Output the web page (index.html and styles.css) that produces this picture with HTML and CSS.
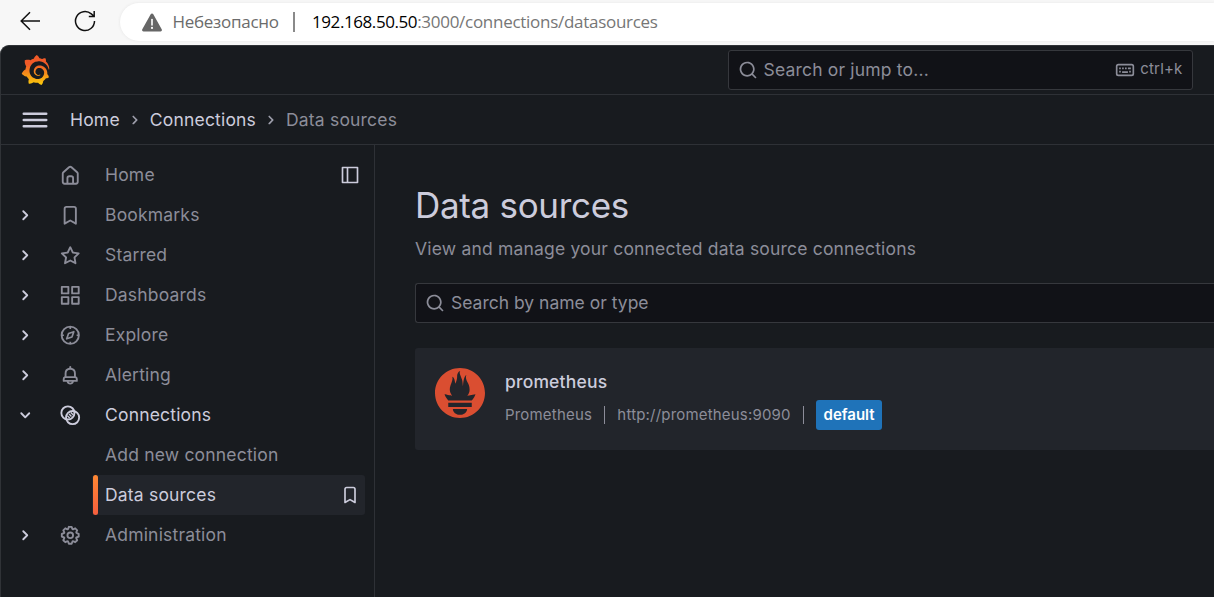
FILE: index.html
```html
<!DOCTYPE html>
<html lang="en">
<head>
<meta charset="utf-8">
<title>Data sources - Grafana</title>
<link rel="stylesheet" href="styles.css">
</head>
<body>
<svg width="0" height="0" class="sprite" aria-hidden="true">
  <symbol id="chevron" viewBox="0 0 24 24"><path d="M14.83,11.29,10.59,7.05a1,1,0,0,0-1.42,0,1,1,0,0,0,0,1.41L12.71,12,9.17,15.54a1,1,0,0,0,0,1.41,1,1,0,0,0,.71.29,1,1,0,0,0,.71-.29l4.24-4.24A1,1,0,0,0,14.83,11.29Z"/></symbol>
  <symbol id="bookmark" viewBox="0 0 24 24"><path d="M16,2H8A3,3,0,0,0,5,5V21a1,1,0,0,0,.5.87,1,1,0,0,0,1,0L12,18.69l5.5,3.18A1,1,0,0,0,18,22a1,1,0,0,0,.5-.13A1,1,0,0,0,19,21V5A3,3,0,0,0,16,2Zm1,17.27-4.5-2.6a1,1,0,0,0-1,0L7,19.27V5A1,1,0,0,1,8,4h8a1,1,0,0,1,1,1Z"/></symbol>
  <symbol id="search" viewBox="0 0 24 24"><path d="M21.71,20.29,18,16.61A9,9,0,1,0,16.61,18l3.68,3.68a1,1,0,0,0,1.42,0A1,1,0,0,0,21.71,20.29ZM11,18a7,7,0,1,1,7-7A7,7,0,0,1,11,18Z"/></symbol>
</svg>

<header class="browser">
  <svg class="back" viewBox="0 0 22 20"><path d="M21 10H2.200M11 1.200 2.200 10 11 18.800"/></svg>
  <svg class="reload" viewBox="0 0 22 22"><path d="M20.500 11a9.500 9.500 0 1 1-3.200-7.100L20 6.200M20.200 1v5.400h-5.400"/></svg>
  <div class="address">
    <svg class="warn" viewBox="0 0 20 19"><path fill="#666" d="M8.700 1.200a1.500 1.500 0 0 1 2.600 0l8.400 15a1.500 1.500 0 0 1-1.300 2.300H1.600a1.500 1.500 0 0 1-1.300-2.300z"/><path stroke="#fff" stroke-width="1.600" stroke-linecap="round" d="M10 6.500v5.500"/><circle cx="10" cy="14.900" r="1.100" fill="#fff"/></svg>
    <span class="insecure">Небезопасно</span>
    <span class="divider"></span>
    <span class="url"><b>192.168.50.50</b>:3000/connections/datasources</span>
  </div>
</header>

<div class="app">
  <div class="topbar">
    <svg class="logo" viewBox="0 0 351 365"><defs><linearGradient id="g" gradientUnits="userSpaceOnUse" x1="175.500" y1="445" x2="175.500" y2="114"><stop offset="0" stop-color="#fff100"/><stop offset="1" stop-color="#f05a28"/></linearGradient></defs><path fill="url(#g)" d="M342,161.2c-0.6-6.1-1.6-13.1-3.6-20.9c-2-7.7-5-16.2-9.4-25c-4.4-8.800-10.1-17.9-17.5-26.8c-2.9-3.5-6.1-6.9-9.5-10.2c5.1-20.3-6.2-37.9-6.2-37.9c-19.5-1.2-31.9,6.1-36.5,9.4c-0.8-0.3-1.5-0.7-2.3-1c-3.3-1.3-6.7-2.6-10.3-3.7c-3.5-1.1-7.1-2.1-10.8-3c-3.7-0.9-7.4-1.6-11.2-2.2c-0.7-0.1-1.3-0.2-2-0.3c-8.5-27.2-32.9-38.6-32.9-38.6c-27.3,17.3-32.4,41.5-32.4,41.5s-0.1,0.5-0.3,1.4c-1.5,0.4-3,0.9-4.5,1.3c-2.1,0.6-4.2,1.4-6.2,2.2c-2.1,0.8-4.1,1.6-6.2,2.5c-4.1,1.8-8.2,3.8-12.2,6c-3.9,2.2-7.7,4.6-11.4,7.1c-0.5-0.2-1-0.4-1-0.4c-37.8-14.4-71.3,2.9-71.3,2.9c-3.1,40.2,15.1,65.5,18.7,70.1c-0.9,2.5-1.7,5-2.5,7.5c-2.8,9.1-4.9,18.4-6.2,28.1c-0.2,1.4-0.4,2.8-0.5,4.2C18.8,192.700,8.5,228,8.5,228c29.1,33.5,63.1,35.6,63.1,35.6c0,0,0.1-0.1,0.1-0.1c4.3,7.7,9.3,15,14.9,21.9c2.4,2.9,4.8,5.6,7.4,8.3c-10.6,30.4,1.5,55.6,1.5,55.6c32.4,1.2,53.7-14.2,58.2-17.7c3.2,1.1,6.5,2.1,9.8,2.9c10,2.6,20.2,4.1,30.4,4.5c2.5,0.1,5.1,0.2,7.6,0.1l1.2,0l0.8,0l1.6,0l1.6-0.1l0,0.1c15.3,21.8,42.1,24.9,42.1,24.9c19.1-20.1,20.2-40.1,20.2-44.400l0,0c0,0,0-0.1,0-0.3c0-0.4,0-0.6,0-0.6l0,0c0-0.3,0-0.6,0-0.9c4-2.8,7.8-5.8,11.4-9.1c7.6-6.9,14.3-14.8,19.9-23.3c0.5-0.8,1-1.6,1.5-2.4c21.6,1.2,36.9-13.4,36.9-13.4c-3.6-22.5-16.4-33.5-19.1-35.6l0,0c0,0-0.1-0.1-0.3-0.2c-0.2-0.1-0.2-0.2-0.2-0.2c0,0,0,0,0,0c-0.1-0.1-0.3-0.2-0.5-0.3c0.1-1.4,0.2-2.7,0.3-4.1c0.2-2.4,0.2-4.9,0.2-7.3l0-1.8l0-0.9l0-0.5c0-0.6,0-0.4,0-0.6l-0.1-1.5l-0.1-2c0-0.7-0.1-1.3-0.2-1.9c-0.1-0.6-0.1-1.3-0.2-1.9l-0.2-1.9l-0.3-1.9c-0.4-2.5-0.8-4.9-1.4-7.4c-2.3-9.7-6.1-18.9-11-27.2c-5-8.3-11.2-15.6-18.3-21.8c-7-6.2-14.9-11.2-23.1-14.9c-8.3-3.7-16.9-6.1-25.5-7.2c-4.3-0.6-8.6-0.8-12.9-0.7l-1.6,0l-0.4,0c-0.1,0-0.6,0-0.5,0l-0.7,0l-1.6,0.1c-0.6,0-1.2,0.1-1.7,0.1c-2.2,0.2-4.4,0.5-6.5,0.9c-8.6,1.6-16.7,4.7-23.8,9c-7.1,4.3-13.3,9.6-18.3,15.6c-5,6-8.9,12.7-11.6,19.6c-2.7,6.9-4.2,14.1-4.6,21c-0.1,1.7-0.1,3.5-0.1,5.2c0,0.4,0,0.9,0,1.3l0.1,1.4c0.1,0.8,0.1,1.7,0.2,2.5c0.3,3.5,1,6.9,1.9,10.1c1.9,6.5,4.9,12.4,8.6,17.4c3.7,5,8.2,9.1,12.9,12.4c4.7,3.2,9.8,5.5,14.8,7c5,1.5,10,2.1,14.7,2.1c0.6,0,1.2,0,1.7,0c0.3,0,0.6,0,0.9,0c0.3,0,0.6,0,0.9-0.1c0.5,0,1-0.1,1.5-0.1c0.1,0,0.3,0,0.4-0.1l0.5-0.1c0.3,0,0.6-0.1,0.9-0.1c0.6-0.1,1.1-0.2,1.7-0.3c0.6-0.1,1.1-0.2,1.6-0.4c1.1-0.2,2.1-0.6,3.1-0.9c2-0.7,4-1.5,5.7-2.4c1.8-0.9,3.4-2,5-3c0.4-0.3,0.9-0.6,1.3-1c1.6-1.3,1.9-3.7,0.6-5.3c-1.1-1.4-3.1-1.8-4.7-0.9c-0.4,0.2-0.8,0.4-1.2,0.6c-1.4,0.7-2.8,1.3-4.3,1.8c-1.5,0.5-3.1,0.9-4.7,1.2c-0.8,0.1-1.6,0.2-2.5,0.3c-0.4,0-0.8,0.1-1.3,0.1c-0.4,0-0.9,0-1.2,0c-0.4,0-0.8,0-1.2,0c-0.5,0-1,0-1.5-0.1l-0.3,0l-0.3,0c-0.2,0-0.5,0-0.7-0.1c-0.5-0.1-0.9-0.1-1.4-0.2c-3.7-0.5-7.4-1.6-10.9-3.2c-3.6-1.6-7-3.8-10.1-6.6c-3.1-2.8-5.8-6.1-7.9-9.9c-2.1-3.8-3.6-8-4.3-12.4c-0.3-2.2-0.5-4.5-0.4-6.7c0-0.6,0.1-1.2,0.1-1.8l0-0.3l0-0.5c0-0.3,0.1-0.6,0.1-0.9c0.1-1.2,0.3-2.4,0.5-3.6c1.7-9.6,6.5-19,13.9-26.1c1.9-1.8,3.9-3.4,6-4.9c2.1-1.5,4.4-2.8,6.8-3.9c2.4-1.1,4.8-2,7.4-2.7c2.5-0.7,5.1-1.1,7.8-1.4c1.3-0.1,2.6-0.2,4-0.2c0.4,0,0.6,0,0.9,0l1.1,0l0.7,0l0.4,0l1.1,0.1c2.9,0.2,5.7,0.6,8.5,1.3c5.6,1.2,11.1,3.3,16.2,6.1c10.2,5.7,18.9,14.5,24.2,25.1c2.7,5.3,4.6,11,5.5,16.9c0.2,1.5,0.4,3,0.5,4.5l0.1,1.1l0.1,1.1c0,0.4,0,0.8,0,1.1c0,0.4,0,0.8,0,1.1l0,1l0,1.1c0,0.7-0.1,1.9-0.1,2.6c-0.1,1.6-0.3,3.3-0.5,4.9c-0.2,1.6-0.5,3.2-0.8,4.8c-0.3,1.6-0.7,3.2-1.1,4.7c-0.8,3.1-1.8,6.2-3,9.3c-2.4,6-5.6,11.8-9.4,17.1c-7.7,10.6-18.2,19.2-30.2,24.7c-6,2.7-12.3,4.7-18.8,5.7c-3.2,0.6-6.5,0.9-9.8,1l-0.6,0l-0.5,0l-1.1,0l-1.6,0l-1.2,0c-1.8,0-3.5-0.1-5.3-0.3c-7-0.5-13.9-1.8-20.7-3.7c-6.7-1.9-13.2-4.6-19.4-7.8c-12.3-6.6-23.4-15.6-32-26.5c-4.3-5.4-8.1-11.3-11.2-17.4c-3.1-6.1-5.6-12.6-7.4-19.1c-1.8-6.6-2.9-13.3-3.4-20.1l-0.1-1.3l0-5.800c0-0.8,0-1.7,0-2.5c0.1-3.3,0.4-6.8,0.8-10.2c0.4-3.4,1-6.9,1.7-10.3c0.7-3.4,1.5-6.8,2.5-10.2c1.9-6.7,4.3-13.2,7.1-19.3c5.7-12.2,13.1-23.1,22-31.8c2.2-2.2,4.5-4.2,6.9-6.2c2.4-1.9,4.9-3.7,7.5-5.4c2.5-1.7,5.2-3.2,7.9-4.6c1.3-0.7,2.7-1.4,4.1-2l4.200-1.800c2.8-1.2,5.7-2.2,8.7-3.1l4.400-1.300c1.5-0.4,3-0.8,4.5-1.1l6.900-1.400l4.600-0.700l5.200-0.600l2.700-0.300l5.100-0.400c2.9-0.100,8.100-0.200,11-0.100c5.8,0.2,11.5,0.9,17,1.9c11.1,2.1,21.5,5.6,31,10.3c9.5,4.6,17.9,10.3,25.3,16.5l2.700,2.400l5.100,4.800l2.400,2.500c3.1,3.3,6,6.6,8.6,10c5.2,6.7,9.4,13.5,12.7,19.9l1.200,2.400l2.200,4.700l1,2.300c1.2,3,2.4,5.9,3.3,8.6c1.5,4.4,2.6,8.3,3.5,11.7c0.3,1.4,1.6,2.3,3,2.1c1.5-0.1,2.6-1.3,2.6-2.8C342.6,170.4,342.5,166.1,342,161.2z"/></svg>
    <div class="command">
      <svg class="icon"><use href="#search"/></svg>
      <span class="placeholder">Search or jump to...</span>
      <svg class="icon keyboard" viewBox="0 0 24 24"><rect x="2" y="5.500" width="20" height="13" rx="2" fill="none" stroke="currentColor" stroke-width="2"/><path d="M5 9h2v2H5zM8.500 9h2v2h-2zM12 9h2v2h-2zM15.500 9h3.500v2h-3.500zM5 13h2v2H5zM8.500 13.500h7v2h-7zM17 13h2v2h-2z"/></svg>
      <span class="shortcut">ctrl+k</span>
    </div>
  </div>

  <div class="crumbbar">
    <svg class="menu" viewBox="0 0 24 24"><path d="M3,8H21a1,1,0,0,0,0-2H3A1,1,0,0,0,3,8Zm18,8H3a1,1,0,0,0,0,2H21a1,1,0,0,0,0-2Zm0-5H3a1,1,0,0,0,0,2H21a1,1,0,0,0,0-2Z"/></svg>
    <span class="crumb">Home</span>
    <svg class="icon"><use href="#chevron"/></svg>
    <span class="crumb">Connections</span>
    <svg class="icon"><use href="#chevron"/></svg>
    <span class="crumb current">Data sources</span>
  </div>

  <div class="body">
    <nav class="sidebar">
      <div class="item">
        <span class="toggle"></span>
        <svg class="nav-icon" viewBox="0 0 24 24"><path d="M20,8h0L14,2.740a3,3,0,0,0-4,0L4,8a3,3,0,0,0-1,2.260V19a3,3,0,0,0,3,3H18a3,3,0,0,0,3-3V10.250A3,3,0,0,0,20,8ZM14,20H10V15a1,1,0,0,1,1-1h2a1,1,0,0,1,1,1Zm5-1a1,1,0,0,1-1,1H16V15a3,3,0,0,0-3-3H11a3,3,0,0,0-3,3v5H6a1,1,0,0,1-1-1V10.250a1,1,0,0,1,.34-.75l6-5.250a1,1,0,0,1,1.320,0l6,5.250a1,1,0,0,1,.34.75Z"/></svg>
        <span class="label">Home</span>
        <svg class="action" viewBox="0 0 24 24"><path d="M21,2H3A1,1,0,0,0,2,3V21a1,1,0,0,0,1,1H21a1,1,0,0,0,1-1V3A1,1,0,0,0,21,2ZM8,20H4V4H8Zm12,0H10V4H20Z"/></svg>
      </div>
      <div class="item">
        <svg class="toggle"><use href="#chevron"/></svg>
        <svg class="nav-icon"><use href="#bookmark"/></svg>
        <span class="label">Bookmarks</span>
      </div>
      <div class="item">
        <svg class="toggle"><use href="#chevron"/></svg>
        <svg class="nav-icon" viewBox="0 0 24 24"><path d="M22,9.67A1,1,0,0,0,21.14,9l-5.69-.83L12.9,3a1,1,0,0,0-1.8,0L8.55,8.16,2.86,9a1,1,0,0,0-.81.68,1,1,0,0,0,.25,1l4.130,4-1,5.680A1,1,0,0,0,6.9,21.440L12,18.770l5.1,2.670a.93.93,0,0,0,.46.12,1,1,0,0,0,.59-.19,1,1,0,0,0,.4-1l-1-5.680,4.130-4A1,1,0,0,0,22,9.67Zm-6.150,4a1,1,0,0,0-.29.88l.72,4.2-3.76-2a1.060,1.060,0,0,0-.94,0l-3.760,2,.72-4.2a1,1,0,0,0-.29-.88l-3-3,4.210-.61a1,1,0,0,0,.76-.55L12,5.7l1.880,3.820a1,1,0,0,0,.76.55l4.210.61Z"/></svg>
        <span class="label">Starred</span>
      </div>
      <div class="item">
        <svg class="toggle"><use href="#chevron"/></svg>
        <svg class="nav-icon" viewBox="0 0 24 24"><path d="M10,13H3a1,1,0,0,0-1,1v7a1,1,0,0,0,1,1h7a1,1,0,0,0,1-1V14A1,1,0,0,0,10,13ZM9,20H4V15H9ZM21,2H14a1,1,0,0,0-1,1v7a1,1,0,0,0,1,1h7a1,1,0,0,0,1-1V3A1,1,0,0,0,21,2ZM20,9H15V4h5Zm1,4H14a1,1,0,0,0-1,1v7a1,1,0,0,0,1,1h7a1,1,0,0,0,1-1V14A1,1,0,0,0,21,13Zm-1,7H15V15h5ZM10,2H3A1,1,0,0,0,2,3v7a1,1,0,0,0,1,1h7a1,1,0,0,0,1-1V3A1,1,0,0,0,10,2ZM9,9H4V4H9Z"/></svg>
        <span class="label">Dashboards</span>
      </div>
      <div class="item">
        <svg class="toggle"><use href="#chevron"/></svg>
        <svg class="nav-icon outline" viewBox="0 0 24 24"><circle cx="12" cy="12" r="9.200"/><path stroke-width="1.800" stroke-linejoin="round" d="M15.800 8.200 13.800 13.800l-5.600 2L10.200 10.200zM12 3v2.200M12 18.800v2.200M3 12h2.200M18.800 12h2.200"/></svg>
        <span class="label">Explore</span>
      </div>
      <div class="item">
        <svg class="toggle"><use href="#chevron"/></svg>
        <svg class="nav-icon" viewBox="0 0 24 24"><path d="M18,13.180V10a6,6,0,0,0-5-5.910V3a1,1,0,0,0-2,0V4.090A6,6,0,0,0,6,10v3.180A3,3,0,0,0,4,16v2a1,1,0,0,0,1,1H8.140a4,4,0,0,0,7.720,0H19a1,1,0,0,0,1-1V16A3,3,0,0,0,18,13.180ZM8,10a4,4,0,0,1,8,0v3H8Zm4,10a2,2,0,0,1-1.720-1h3.440A2,2,0,0,1,12,20Zm6-3H6V16a1,1,0,0,1,1-1H17a1,1,0,0,1,1,1Z"/></svg>
        <span class="label">Alerting</span>
      </div>
      <div class="item active">
        <svg class="toggle open"><use href="#chevron"/></svg>
        <svg class="nav-icon outline" viewBox="0 0 24 24"><circle cx="9.500" cy="9.500" r="7"/><circle cx="14.500" cy="14.500" r="7"/><path stroke-width="1.500" d="M12.600 9l2.600 2.600M8.800 12.400l2.600 2.600M10.700 10.700l2.600 2.600"/></svg>
        <span class="label">Connections</span>
      </div>
      <div class="item child">
        <span class="label">Add new connection</span>
      </div>
      <div class="item child selected">
        <span class="label">Data sources</span>
        <svg class="action"><use href="#bookmark"/></svg>
      </div>
      <div class="item">
        <svg class="toggle"><use href="#chevron"/></svg>
        <svg class="nav-icon" viewBox="0 0 24 24"><path d="M21.320,9.550l-1.890-.63.89-1.780A1,1,0,0,0,20.130,6L18,3.870a1,1,0,0,0-1.150-.19l-1.780.89-.63-1.890A1,1,0,0,0,13.500,2h-3a1,1,0,0,0-.95.68L8.920,4.570,7.140,3.680A1,1,0,0,0,6,3.870L3.870,6a1,1,0,0,0-.19,1.150l.89,1.780-1.890.63A1,1,0,0,0,2,10.500v3a1,1,0,0,0,.68.95l1.890.63-.89,1.780A1,1,0,0,0,3.870,18L6,20.130a1,1,0,0,0,1.150.19l1.780-.89.63,1.890a1,1,0,0,0,.95.68h3a1,1,0,0,0,.95-.68l.63-1.890,1.780.89A1,1,0,0,0,18,20.130L20.130,18a1,1,0,0,0,.19-1.150l-.89-1.780,1.890-.63A1,1,0,0,0,22,13.500v-3A1,1,0,0,0,21.320,9.550ZM20,12.780l-1.200.4A2,2,0,0,0,17.640,16l.57,1.140-1.100,1.100L16,17.640a2,2,0,0,0-2.790,1.160l-.4,1.200H11.220l-.4-1.200A2,2,0,0,0,8,17.640l-1.140.57-1.100-1.100L6.360,16A2,2,0,0,0,5.200,13.180L4,12.780V11.220l1.200-.4A2,2,0,0,0,6.360,8L5.790,6.890l1.100-1.100L8,6.360A2,2,0,0,0,10.820,5.200l.4-1.200h1.560l.4,1.200A2,2,0,0,0,16,6.360l1.140-.57,1.100,1.100L17.640,8a2,2,0,0,0,1.160,2.790l1.200.4ZM12,8a4,4,0,1,0,4,4A4,4,0,0,0,12,8Zm0,6a2,2,0,1,1,2-2A2,2,0,0,1,12,14Z"/></svg>
        <span class="label">Administration</span>
      </div>
    </nav>

    <main class="page">
      <h1>Data sources</h1>
      <p class="subtitle">View and manage your connected data source connections</p>
      <div class="filter">
        <svg class="icon"><use href="#search"/></svg>
        <span class="placeholder">Search by name or type</span>
      </div>
      <article class="card">
        <svg class="prom" viewBox="0 0 24 24"><path fill="#da4e31" d="M12 0C5.373 0 0 5.372 0 12c0 6.627 5.373 12 12 12s12-5.373 12-12c0-6.628-5.373-12-12-12zm0 22.460c-1.885 0-3.414-1.260-3.414-2.814h6.828c0 1.553-1.528 2.813-3.414 2.813zm5.640-3.745H6.360v-2.046h11.280v2.046zm-.04-3.098H6.391c-.037-.043-.075-.086-.111-.13-1.155-1.401-1.427-2.133-1.690-2.879-.005-.025 1.400.287 2.395.511 0 0 .513.119 1.262.255-.72-.843-1.147-1.915-1.147-3.010 0-2.406 1.845-4.508 1.180-6.207.648.053 1.340 1.367 1.387 3.422.689-.951.977-2.690.977-3.755 0-1.103.727-2.385 1.454-2.429-.648 1.069.168 1.984.894 4.256.272.854.237 2.290.447 3.201.07-1.892.395-4.652 1.595-5.605-.529 1.200.079 2.702.494 3.424.671 1.164 1.078 2.047 1.078 3.716 0 1.119-.413 2.172-1.110 2.996.792-.149 1.340-.283 1.340-.283l2.573-.502s-.374 1.538-1.810 3.019z"/></svg>
        <div class="info">
          <h2>prometheus</h2>
          <div class="meta">
            <span class="type">Prometheus</span>
            <span class="sep"></span>
            <span class="link">http://prometheus:9090</span>
            <span class="sep"></span>
            <span class="tag">default</span>
          </div>
        </div>
      </article>
    </main>
  </div>
</div>
</body>
</html>
```
FILE: styles.css
```css
* { box-sizing: border-box; }
body {
  margin: 0;
  width: 1214px;
  height: 597px;
  overflow: hidden;
  display: flex;
  flex-direction: column;
  background: #f7f7f7;
  font: 400 17.5px/24px Inter, "Liberation Sans", sans-serif;
  letter-spacing: 0.01071em;
}
svg { display: block; flex: none; fill: currentColor; }
.sprite { position: absolute; }
h1, h2, p { margin: 0; font-weight: 400; }

.browser {
  height: 45px;
  flex: none;
  display: flex;
  align-items: flex-start;
  font-family: "Open Sans", "Noto Sans", sans-serif;
  font-size: 17px;
  letter-spacing: -0.28px;
}
.back, .reload { fill: none; stroke: #111; stroke-width: 1.5; }
.back { width: 22px; height: 20px; margin: 11px 0 0 19px; }
.reload { width: 22px; height: 22px; margin: 10px 0 0 33px; }
.address {
  flex: 1;
  height: 38px;
  margin: 3px 0 0 24px;
  padding-left: 22px;
  display: flex;
  align-items: center;
  background: #fff;
  border-radius: 19px 0 0 19px;
  box-shadow: 0 0 3px #e4e4e4;
}
.warn { width: 20px; height: 19px; }
.insecure { width: 131px; padding-left: 10.5px; color: #6b6b6b; white-space: nowrap; }
.divider { width: 2px; height: 20px; background: #8a8a8a; }
.url { margin-left: 17px; color: #767676; white-space: nowrap; }
.url b { font-weight: 400; color: #000; letter-spacing: -0.42px; }

.app {
  flex: 1;
  min-height: 0;
  display: flex;
  flex-direction: column;
  background: #181b1f;
  border: solid #303337;
  border-width: 1px 0 0 1px;
  border-top-left-radius: 9px;
  color: #ccccdc;
}
.topbar, .crumbbar { flex: none; display: flex; align-items: center; border-bottom: 1px solid #2e3136; }
.topbar { height: 49px; padding: 0 21px 0 19.5px; justify-content: space-between; }
.logo { width: 29px; height: 30px; }
.icon { width: 20px; height: 20px; }
.command {
  width: 465px;
  height: 40px;
  padding: 0 9.5px 0 9px;
  display: flex;
  align-items: center;
  background: #111217;
  border: 1px solid #36383d;
  border-radius: 3px;
  color: #8c8d99;
}
.placeholder { margin-left: 6px; }
.command .placeholder { margin-left: 5.5px; }
.filter .placeholder { letter-spacing: 0; }
.keyboard { margin-left: auto; }
.shortcut { margin-left: 5px; padding-bottom: 2px; font-size: 15px; letter-spacing: 0.0125em; }

.crumbbar { height: 50px; padding-left: 19px; }
.menu { width: 30px; height: 30px; margin-right: 20px; }
.crumbbar .icon { margin: 0 5px; color: #9d9eab; }
.crumb.current { color: #8c8d99; }

.body { flex: 1; min-height: 0; display: flex; }
.sidebar { width: 374px; flex: none; padding: 10px 9px 0 12.5px; border-right: 1px solid #2e3136; }
.item { height: 40px; display: flex; align-items: center; color: #8c8d99; }
.toggle { width: 22.5px; height: 22.5px; color: #ccccdc; }
.toggle.open { transform: rotate(90deg); }
.nav-icon { width: 22.5px; height: 22.5px; margin: 0 24px 0 22.5px; }
.outline { fill: none; stroke: currentColor; stroke-width: 2; }
.active { color: #ccccdc; }
.action { width: 20px; height: 20px; margin: 0 5px 0 auto; color: #ccccdc; }
.child { margin-left: 78.5px; padding-left: 13px; }
.selected {
  padding-left: 0;
  color: #ccccdc;
  border-radius: 3px;
  background: #22252b;
}
.selected::before {
  content: "";
  width: 5px;
  height: 40px;
  margin: 0 7.5px 0 0.5px;
  border-radius: 2.5px;
  background: linear-gradient(#ff8833, #f55f3e);
}

.page { flex: 1; min-width: 0; padding: 39px 0 0 40px; }
h1 { font-size: 35px; line-height: 42px; letter-spacing: -0.00893em; white-space: nowrap; }
.subtitle { margin-top: 11px; color: #8c8d99; }
.filter {
  height: 40px;
  margin-top: 22px;
  padding-left: 9px;
  display: flex;
  align-items: center;
  background: #111217;
  border: 1px solid #36383d;
  border-right: 0;
  border-radius: 3px 0 0 3px;
  color: #8c8d99;
}
.card {
  height: 102px;
  margin-top: 25px;
  padding: 20px;
  display: flex;
  gap: 20px;
  background: #22252b;
  border-radius: 3px 0 0 3px;
}
.prom { width: 50px; height: 50px; }
h2 { height: 32px; font-size: 17.5px; line-height: 28px; font-weight: 500; }
.meta { display: flex; align-items: center; height: 30px; font-size: 15px; letter-spacing: 0.0125em; color: #8c8d99; }
.sep { width: 1px; height: 18px; margin: 0 12px 0 12.3px; background: #8c8d99; }
.tag {
  width: 66px;
  height: 30px;
  text-align: center;
  line-height: 30px;
  letter-spacing: 0;
  border-radius: 3px;
  background: #1f73b9;
  color: #fff;
  font-weight: 600;
}
```
